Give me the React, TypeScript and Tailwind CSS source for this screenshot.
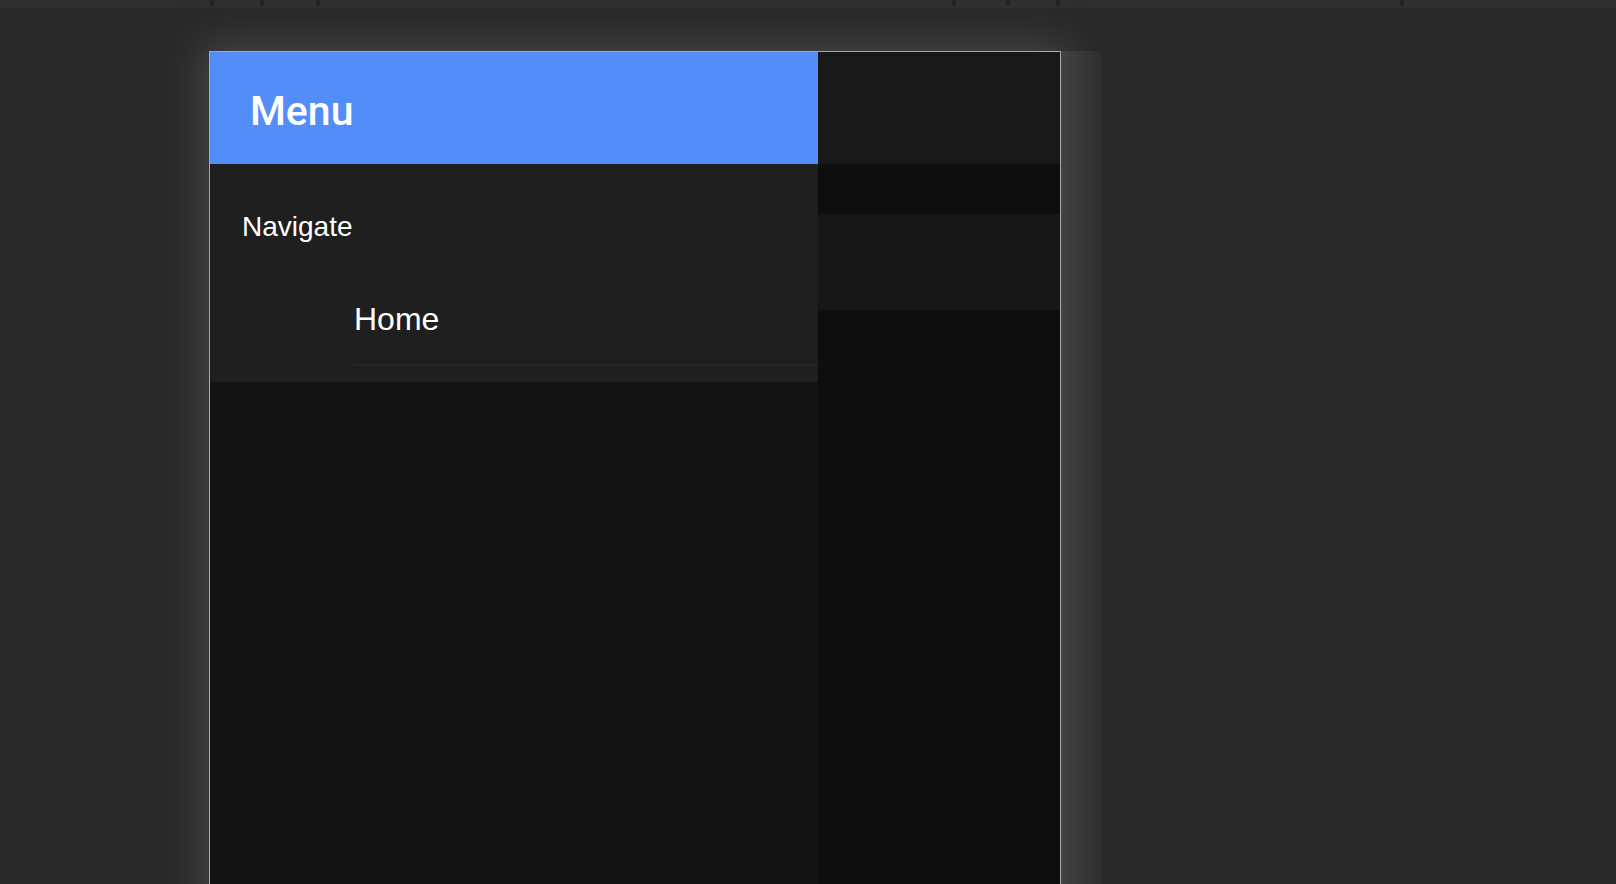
const ticks = ['ml-[210px]', 'ml-[46px]', 'ml-[52px]', 'ml-[632px]', 'ml-[50px]', 'ml-[46px]', 'ml-[340px]'];

function Ruler() {
  return (
    <div className="flex h-2 w-full items-start bg-[#2f2f2f]">
      {ticks.map((m, i) => (
        <div key={i} className={`${m} h-[6px] w-1 bg-[#242424]`} />
      ))}
    </div>
  );
}

function SideColumn() {
  return (
    <div className="flex w-[242px] flex-col bg-[#0e0e0e]">
      <div className="h-[112px] bg-[#191919]" />
      <div className="h-[50px] bg-[#0e0e0e]" />
      <div className="h-[96px] bg-[#171717]" />
    </div>
  );
}

function Drawer() {
  return (
    <div className="flex w-[608px] flex-col bg-[#131313]">
      <div className="h-[112px] bg-[#528df8] pl-[40px] pt-[35px]">
        <h1 className="text-[41px] font-medium leading-[48px] text-white" style={{ fontFamily: 'Roboto, sans-serif' }}>
          Menu
        </h1>
      </div>
      <div className="h-[218px] bg-[#1f1f1f] pt-[47px]" style={{ fontFamily: '"Liberation Sans", Arial, sans-serif' }}>
        <p className="pl-[32px] text-[28px] leading-[32px] text-white">Navigate</p>
        <div className="ml-[144px] mt-[58px]">
          <p className="pb-[27px] text-[32px] leading-[36px] text-white">Home</p>
          <div className="h-[2px] bg-[#262626]" />
        </div>
      </div>
    </div>
  );
}

export default function App() {
  return (
    <div className="h-[884px] w-full overflow-hidden bg-[#282828]">
      <Ruler />
      <div className="flex items-start pl-[209px] pt-[43px]">
        <div className="flex h-[900px] w-[852px] border border-b-0 border-[#a9a9a9] shadow-[0_0_40px_6px_#4a4a4a]">
          <Drawer />
          <SideColumn />
        </div>
        <div className="h-[900px] w-[40px] bg-gradient-to-r from-[#434343] to-[#2e2e2e]" />
      </div>
    </div>
  );
}
